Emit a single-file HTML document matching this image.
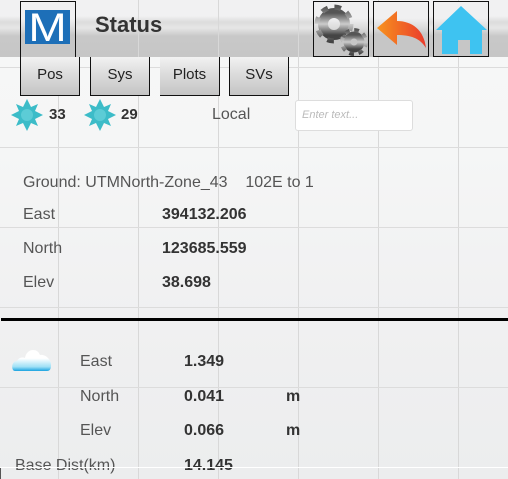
<!DOCTYPE html>
<html><head><style>
body{margin:0;width:508px;height:479px;overflow:hidden;position:relative;font-family:"Liberation Sans",sans-serif;background:linear-gradient(#f6f7f7 60px,#f5f6f6 150px,#f0f0f1 320px,#ecedee 479px);}
.a{position:absolute}
.vl{position:absolute;top:0;height:479px;width:1px;background:#d8d8d8}
.hl{position:absolute;left:0;width:508px;height:1px;background:#dcdcdc}
.t{position:absolute;font-size:16px;color:#555}
.b{position:absolute;font-size:16px;color:#333;font-weight:bold}
.tab{position:absolute;top:57px;height:38px;width:58px;border:1px solid #111;border-top:none;background:linear-gradient(#f2f2f2,#dedede 40%,#c4c4c4);font-size:15px;color:#222;text-align:center;line-height:36px}
.btn{position:absolute;top:1px;width:54px;height:54px;border:1px solid #111;background:linear-gradient(#f0f0f1 0,#f0f0f1 30%,#d8d8d8 50%,#c6c6c6 60%,#c6c6c6)}
</style></head><body>
<div class="a" style="left:0;top:0;width:508px;height:57px;background:linear-gradient(#f1f1f2 0,#f1f1f2 16px,#dcdcdc 22px,#e6e6e6 28px,#c8c8c8 36px,#c6c6c6 57px)"></div>
<div class="vl" style="left:58px"></div><div class="vl" style="left:138px"></div><div class="vl" style="left:218px"></div><div class="vl" style="left:298px"></div><div class="vl" style="left:378px"></div><div class="vl" style="left:458px"></div>
<div class="hl" style="top:67px"></div><div class="hl" style="top:147px"></div><div class="hl" style="top:227px"></div><div class="hl" style="top:307px"></div><div class="hl" style="top:387px"></div>
<div class="a" style="left:20px;top:1px;width:54px;height:55px;border:1px solid #111;border-bottom:none;background:linear-gradient(#f0f0f1 30%,#d8d8d8 50%,#c6c6c6 60%)"></div>
<div class="a" style="left:25px;top:10px;width:45px;height:34px;background:#1d6fb8;overflow:hidden"><div style="color:#fff;font-size:40px;text-align:center;line-height:36px;transform:scaleX(1.15)">M</div></div>
<div class="a" style="left:95px;top:12px;font-size:22px;font-weight:bold;color:#333">Status</div>
<div class="btn" style="left:313px"><svg width="54" height="54" viewBox="0 0 54 54"><defs><linearGradient id="g" x1="0" y1="0" x2="0" y2="1"><stop offset="0" stop-color="#555"/><stop offset=".5" stop-color="#ccc"/><stop offset="1" stop-color="#444"/></linearGradient></defs>
<circle cx="20" cy="22" r="11" fill="none" stroke="url(#g)" stroke-width="10"/>
<circle cx="20" cy="22" r="17" fill="none" stroke="url(#g)" stroke-width="5" stroke-dasharray="6.7 6.7"/>
<circle cx="40" cy="40" r="7" fill="none" stroke="url(#g)" stroke-width="7"/>
<circle cx="40" cy="40" r="12" fill="none" stroke="url(#g)" stroke-width="4" stroke-dasharray="4.7 4.7"/></svg></div>
<div class="btn" style="left:373px"><svg width="54" height="54" viewBox="0 0 54 54"><defs><linearGradient id="o" x1="0" x2="1"><stop offset="0" stop-color="#f7931e"/><stop offset="1" stop-color="#ea3b2c"/></linearGradient></defs><path d="M3 26 L23 9 L23 19 C38 19 50 28 52 46 C46 36 36 33 23 33 L23 43 Z" fill="url(#o)"/></svg></div>
<div class="btn" style="left:433px"><svg width="54" height="54" viewBox="0 0 54 54"><path d="M2 28 L27 4 L53 28 L48 28 L48 52 L36 52 L36 38 L24 38 L24 52 L8 52 L8 28 Z" fill="#3ec3f1"/></svg></div>
<div class="tab" style="left:20px">Pos</div><div class="tab" style="left:90px">Sys</div><div class="tab" style="left:160px;border-left:none;width:59px">Plots</div><div class="tab" style="left:229px">SVs</div>
<svg class="a" style="left:10px;top:98px" width="34" height="34" viewBox="-17 -17 34 34"><g fill="#3cbcc8"><polygon points="0,-16 4,-8 11,-11 8,-4 16,0 8,4 11,11 4,8 0,16 -4,8 -11,11 -8,4 -16,0 -8,-4 -11,-11 -4,-8"/></g><circle r="6" fill="#5cccd6"/></svg>
<div class="b" style="left:49px;top:106px;font-size:15px">33</div>
<svg class="a" style="left:83px;top:98px" width="34" height="34" viewBox="-17 -17 34 34"><g fill="#3cbcc8"><polygon points="0,-16 4,-8 11,-11 8,-4 16,0 8,4 11,11 4,8 0,16 -4,8 -11,11 -8,4 -16,0 -8,-4 -11,-11 -4,-8"/></g><circle r="6" fill="#5cccd6"/></svg>
<div class="b" style="left:121px;top:106px;font-size:15px">29</div>
<div class="t" style="left:212px;top:106px">Local</div>
<div class="a" style="left:295px;top:100px;width:116px;height:29px;border:1px solid #ddd;border-radius:3px;background:#fff"></div>
<div class="a" style="left:302px;top:109px;font-size:11px;font-style:italic;color:#bbb">Enter text...</div>
<div class="t" style="left:23px;top:174px">Ground: UTMNorth-Zone_43&nbsp;&nbsp;&nbsp;&nbsp;102E to 1</div>
<div class="t" style="left:23px;top:206px">East</div><div class="b" style="left:162px;top:206px">394132.206</div>
<div class="t" style="left:23px;top:240px">North</div><div class="b" style="left:162px;top:240px">123685.559</div>
<div class="t" style="left:23px;top:274px">Elev</div><div class="b" style="left:162px;top:274px">38.698</div>
<div class="a" style="left:1px;top:318px;width:507px;height:3px;background:#000"></div>
<svg class="a" style="left:11px;top:345px" width="42" height="28" viewBox="0 0 42 28"><defs><linearGradient id="c" x1="0" y1="0" x2="0" y2="1"><stop offset=".4" stop-color="#fff"/><stop offset=".8" stop-color="#9ee0f6"/><stop offset="1" stop-color="#1aa3e0"/></linearGradient></defs><path d="M4 26 C0 26 0 16 6 16 C8 12 12 12 14 13 C15 4 26 2 29 10 C34 9 40 14 40 20 C40 24 39 26 36 26 Z" fill="url(#c)"/></svg>
<div class="t" style="left:80px;top:353px">East</div><div class="b" style="left:184px;top:353px">1.349</div>
<div class="t" style="left:80px;top:388px">North</div><div class="b" style="left:184px;top:388px">0.041</div><div class="b" style="left:286px;top:388px">m</div>
<div class="t" style="left:80px;top:422px">Elev</div><div class="b" style="left:184px;top:422px">0.066</div><div class="b" style="left:286px;top:422px">m</div>
<div class="t" style="left:15px;top:457px">Base Dist(km)</div><div class="b" style="left:184px;top:457px">14.145</div>
<div class="a" style="left:0;top:467px;width:508px;height:1px;background:#fff"></div>
<div class="a" style="left:0;top:468px;width:1px;height:11px;background:#555"></div>
</body></html>
